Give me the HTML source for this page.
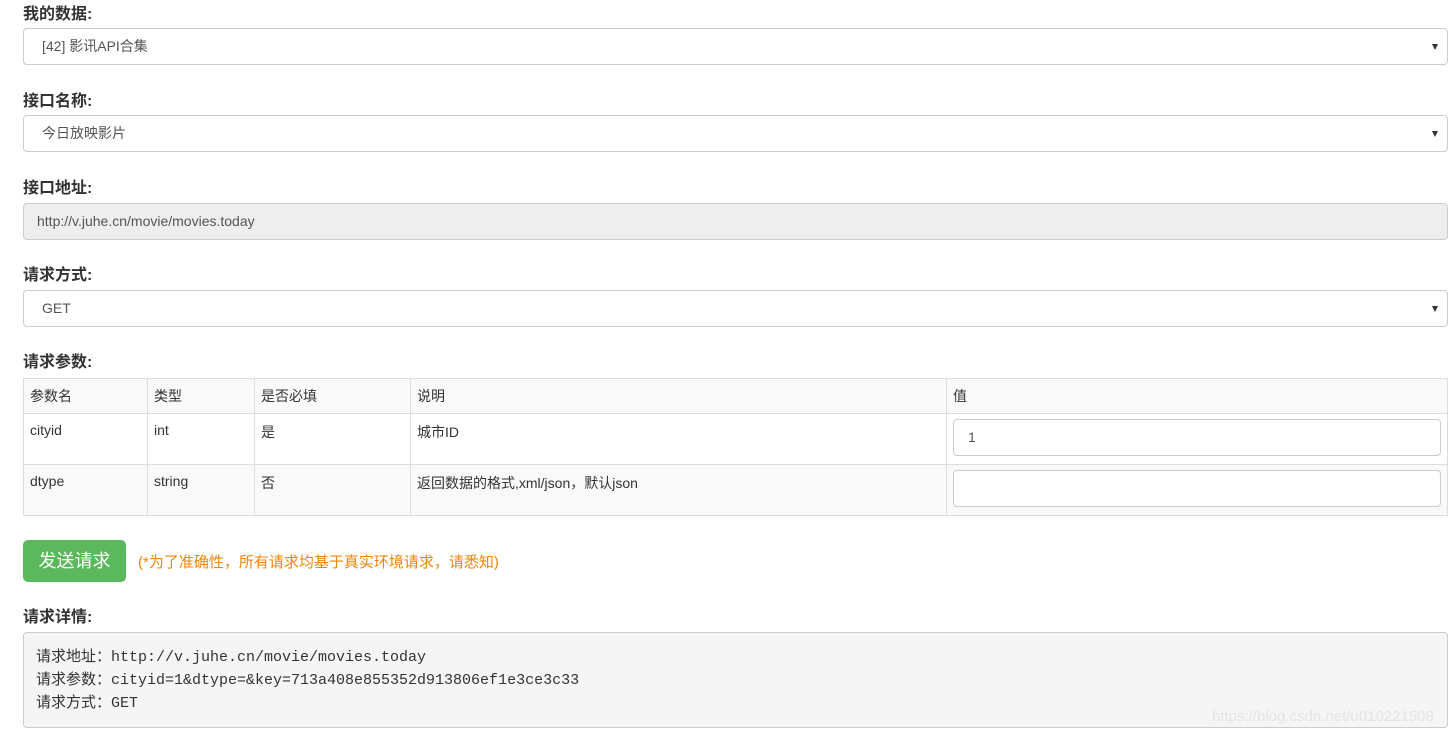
<!DOCTYPE html>
<html><head><meta charset="utf-8"><style>
*{box-sizing:border-box;margin:0;padding:0}
body{width:1456px;height:736px;overflow:hidden;background:#fff;font-family:"Liberation Sans","Noto Sans CJK SC",sans-serif;color:#333;font-size:14px;position:relative}
.a{position:absolute}
.lbl{position:absolute;left:23px;font-weight:bold;font-size:16px;color:#333}
.sel{position:absolute;left:23px;width:1425px;height:37px;border:1px solid #ccc;border-radius:4px;background:#fff;padding:0 18px;line-height:35px;color:#555;font-size:14px}
.sel:after{content:"";position:absolute;right:9px;top:15px;border-left:3.5px solid transparent;border-right:3.5px solid transparent;border-top:6px solid #333}
.sel.ro:after{display:none}
table{position:absolute;left:23px;top:378px;width:1425px;border-collapse:collapse;font-size:14px}
td{border:1px solid #ddd;padding:0 6px;vertical-align:top;color:#333}
tr.h td{height:34px;line-height:34px;background:#f9f9f9}
tr.r td{height:51px;padding-top:8px}
tr.s td{background:#f9f9f9}
.inp{position:absolute;left:953px;width:488px;height:37px;border:1px solid #ccc;border-radius:4px;background:#fff;padding-left:14px;line-height:35px;color:#555}
</style></head><body>
<div class="lbl" style="top:0px">我的数据:</div>
<div class="sel" style="top:28px">[42] 影讯API合集</div>
<div class="lbl" style="top:87px">接口名称:</div>
<div class="sel" style="top:115px">今日放映影片</div>
<div class="lbl" style="top:174px">接口地址:</div>
<div class="sel ro" style="top:203px;background:#eee;padding-left:13px">http://v.juhe.cn/movie/movies.today</div>
<div class="lbl" style="top:261px">请求方式:</div>
<div class="sel" style="top:290px">GET</div>
<div class="lbl" style="top:348px">请求参数:</div>
<table>
<colgroup><col style="width:124px"><col style="width:107px"><col style="width:156px"><col style="width:536px"><col></colgroup>
<tr class="h"><td>参数名</td><td>类型</td><td>是否必填</td><td>说明</td><td>值</td></tr>
<tr class="r"><td>cityid</td><td>int</td><td>是</td><td>城市ID</td><td></td></tr>
<tr class="r s"><td>dtype</td><td>string</td><td>否</td><td>返回数据的格式,xml/json，默认json</td><td></td></tr>
</table>
<div class="inp" style="top:419px">1</div>
<div class="inp" style="top:470px"></div>
<div class="a" style="left:23px;top:540px;width:103px;height:42px;background:#5cb85c;border-radius:5px;color:#fff;font-size:18px;line-height:42px;text-align:center">发送请求</div>
<div class="a" style="left:138px;top:551px;color:#f0850a;font-size:15px">(*为了准确性，所有请求均基于真实环境请求，请悉知)</div>
<div class="lbl" style="top:603px">请求详情:</div>
<div class="a" style="left:23px;top:632px;width:1425px;height:96px;background:#f5f5f5;border:1px solid #ccc;border-radius:4px;padding:13px 12px;font-family:'Liberation Mono','Noto Sans CJK SC',monospace;font-size:15px;line-height:23px;color:#333">请求地址：http://v.juhe.cn/movie/movies.today<br>请求参数：cityid=1&amp;dtype=&amp;key=713a408e855352d913806ef1e3ce3c33<br>请求方式：GET</div>
<div class="a" style="left:1212px;top:708px;color:#e4e4e4;font-size:15px">https://blog.csdn.net/u010221508</div>
</body></html>
